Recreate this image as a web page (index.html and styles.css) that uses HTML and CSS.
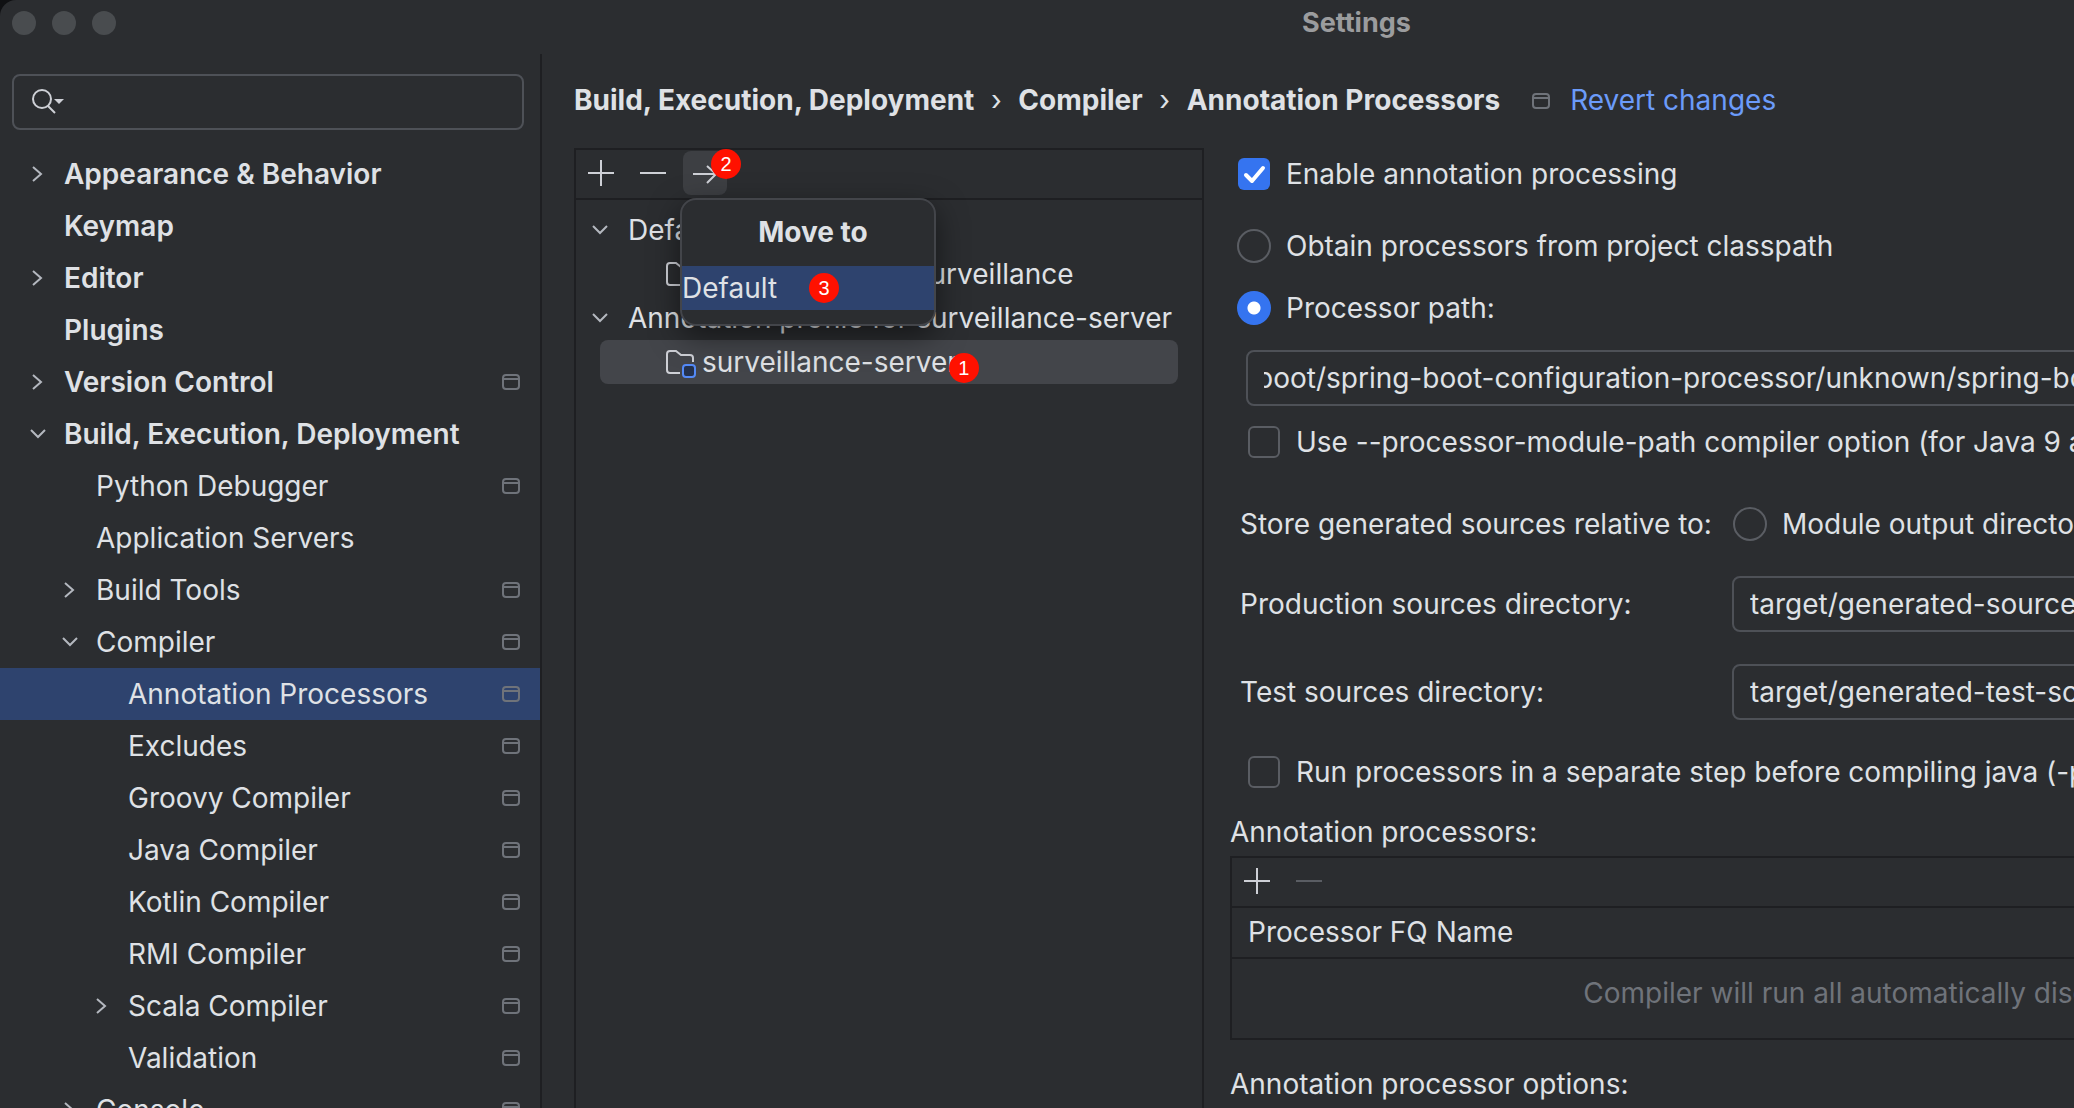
FILE: index.html
```html
<!DOCTYPE html>

<html lang="en">
	<head>
		<meta charset="utf-8">
		<meta name="viewport" content="width=device-width, initial-scale=1">
		<title>Settings</title>
		<link rel="stylesheet" href="styles.css">
	</head>

	<body>
		<!-- Shared icons -->
		<svg class="sprite" aria-hidden="true">
			<symbol id="right" viewBox="0 0 32 32">
				<path d="M11 9l8 7-8 7" />
			</symbol>
			<symbol id="down" viewBox="0 0 32 32">
				<path d="M9 12l7 7 7-7" />
			</symbol>
			<symbol id="project" viewBox="0 0 18 16">
				<rect x="1" y="1" width="16" height="14" rx="3" />
				<path d="M1 5h16" />
			</symbol>
			<symbol id="plus" viewBox="0 0 26 26">
				<path d="M0 13h26M13 0v26" />
			</symbol>
			<symbol id="minus" viewBox="0 0 26 26">
				<path d="M0 13h26" />
			</symbol>
			<symbol id="arrow" viewBox="0 0 26 26">
				<path d="M1 14h23M15 6l9 8-9 9" />
			</symbol>
			<symbol id="module" viewBox="0 0 32 32">
				<path d="M16 27H6q-3 0-3-3V8q0-3 3-3h6l5 4h9q3 0 3 3v4" />
				<rect class="module-mark" x="19" y="19" width="12" height="12" rx="3" />
			</symbol>
		</svg>

		<div class="window">
			<header class="titlebar">
				<div class="lights"><i></i><i></i><i></i></div>
				<h1>Settings</h1>
			</header>

			<div class="content">
				<nav class="sidebar">
					<label class="search">
						<svg viewBox="0 0 36 28" aria-hidden="true">
							<circle cx="11" cy="11" r="9" />
							<path d="M17 18l7 7" />
							<path class="fill" d="M23 11h10l-5 5z" />
						</svg>
						<input type="text" aria-label="Search settings">
					</label>

					<a href="#" class="item top"><svg class="chevron"><use href="#right" /></svg>Appearance &amp; Behavior</a>
					<a href="#" class="item top leaf">Keymap</a>
					<a href="#" class="item top"><svg class="chevron"><use href="#right" /></svg>Editor</a>
					<a href="#" class="item top leaf">Plugins</a>
					<a href="#" class="item top"><svg class="chevron"><use href="#right" /></svg>Version Control<svg class="project"><use href="#project" /></svg></a>
					<a href="#" class="item top"><svg class="chevron"><use href="#down" /></svg>Build, Execution, Deployment</a>
					<a href="#" class="item second leaf">Python Debugger<svg class="project"><use href="#project" /></svg></a>
					<a href="#" class="item second leaf">Application Servers</a>
					<a href="#" class="item second"><svg class="chevron"><use href="#right" /></svg>Build Tools<svg class="project"><use href="#project" /></svg></a>
					<a href="#" class="item second"><svg class="chevron"><use href="#down" /></svg>Compiler<svg class="project"><use href="#project" /></svg></a>
					<a href="#" class="item third leaf selected">Annotation Processors<svg class="project"><use href="#project" /></svg></a>
					<a href="#" class="item third leaf">Excludes<svg class="project"><use href="#project" /></svg></a>
					<a href="#" class="item third leaf">Groovy Compiler<svg class="project"><use href="#project" /></svg></a>
					<a href="#" class="item third leaf">Java Compiler<svg class="project"><use href="#project" /></svg></a>
					<a href="#" class="item third leaf">Kotlin Compiler<svg class="project"><use href="#project" /></svg></a>
					<a href="#" class="item third leaf">RMI Compiler<svg class="project"><use href="#project" /></svg></a>
					<a href="#" class="item third"><svg class="chevron"><use href="#right" /></svg>Scala Compiler<svg class="project"><use href="#project" /></svg></a>
					<a href="#" class="item third leaf">Validation<svg class="project"><use href="#project" /></svg></a>
					<a href="#" class="item second"><svg class="chevron"><use href="#right" /></svg>Console<svg class="project"><use href="#project" /></svg></a>
				</nav>

				<main class="main">
					<div class="breadcrumb">
						<span>Build, Execution, Deployment</span>
						<span class="sep">›</span>
						<span>Compiler</span>
						<span class="sep">›</span>
						<span>Annotation Processors</span>
						<svg class="project"><use href="#project" /></svg>
						<a href="#">Revert changes</a>
					</div>

					<div class="columns">
						<section class="profiles">
							<div class="toolbar">
								<button type="button" aria-label="Add"><svg><use href="#plus" /></svg></button>
								<button type="button" aria-label="Remove"><svg><use href="#minus" /></svg></button>
								<div class="move">
									<button type="button" class="pressed" aria-label="Move to"><svg><use href="#arrow" /></svg></button>
									<b class="badge">2</b>
									<div class="popup">
										<h2>Move to</h2>
										<button type="button">Default<b class="badge">3</b></button>
									</div>
								</div>
							</div>
							<div class="tree">
								<div class="node"><svg class="chevron"><use href="#down" /></svg>Default</div>
								<div class="node module"><svg class="folder"><use href="#module" /></svg>parent-product-surveillance</div>
								<div class="node"><svg class="chevron"><use href="#down" /></svg>Annotation profile for surveillance-server</div>
								<div class="node module current"><svg class="folder"><use href="#module" /></svg><span>surveillance-server<b class="badge">1</b></span></div>
							</div>
						</section>

						<form class="options">
							<label class="row"><input type="checkbox" checked>Enable annotation processing</label>
							<label class="row classpath"><input type="radio" name="source">Obtain processors from project classpath</label>
							<label class="row path"><input type="radio" name="source" checked>Processor path:</label>
							<input type="text" class="field path-field" aria-label="Processor path" value="boot/spring-boot-configuration-processor/unknown/spring-boot-configuration-processor-unknown.jar">
							<label class="row inset"><input type="checkbox">Use --processor-module-path compiler option (for Java 9 and later)</label>

							<div class="pair store">
								<span>Store generated sources relative to:</span>
								<label class="row"><input type="radio" name="store">Module output directory</label>
							</div>
							<div class="pair production">
								<label for="production">Production sources directory:</label>
								<input type="text" class="field" id="production" value="target/generated-sources/annotations">
							</div>
							<div class="pair test">
								<label for="test">Test sources directory:</label>
								<input type="text" class="field" id="test" value="target/generated-test-sources/test-annotations">
							</div>

							<label class="row inset separate"><input type="checkbox">Run processors in a separate step before compiling java (-proc:only mode)</label>

							<h3>Annotation processors:</h3>
							<div class="box">
								<div class="toolbar">
									<button type="button" aria-label="Add processor"><svg><use href="#plus" /></svg></button>
									<button type="button" aria-label="Remove processor" disabled><svg><use href="#minus" /></svg></button>
								</div>
								<table>
									<thead>
										<tr><th>Processor FQ Name</th></tr>
									</thead>
									<tbody>
										<tr><td>Compiler will run all automatically discovered processors</td></tr>
									</tbody>
								</table>
							</div>
							<h3 class="last">Annotation processor options:</h3>
						</form>
					</div>
				</main>
			</div>
		</div>
	</body>
</html>
```

FILE: styles.css
```css
* {
	box-sizing: border-box;
}

html {
	background-color: #101113;
}

body {
	margin: 0;
	height: 100vh;
	overflow: hidden;
	font: 28px Inter, "Liberation Sans", sans-serif;
	line-height: 32px;
	color: #dfe1e5;
	white-space: nowrap;
}

button, input {
	font: inherit;
	color: inherit;
	margin: 0;
}

a {
	color: inherit;
	text-decoration: none;
}

h1, h2, h3 {
	margin: 0;
	font-size: 28px;
}

svg {
	fill: none;
	stroke: #ced0d6;
	stroke-width: 2px;
	flex-shrink: 0;
}

.sprite {
	display: none;
}

/* the window is wider than the screen and runs off to the right */
.window {
	display: flex;
	flex-direction: column;
	width: 131%;
	height: 100%;
	background-color: #2b2d30;
	border-top-left-radius: 16px;
}

.titlebar {
	display: grid;
	grid-template-columns: 1fr auto 1fr;
	align-items: center;
	height: 54px;
	padding: 0 16px 8px 12px;
	flex-shrink: 0;
}

.titlebar h1 {
	font-size: 27px;
	color: #9b9c9e;
}

.lights {
	display: flex;
	gap: 16px;
}

.lights i {
	width: 24px;
	height: 24px;
	border-radius: 50%;
	background-color: #494c4f;
}

.content {
	display: flex;
	flex: 1;
	min-height: 0;
}

/* sidebar */
.sidebar {
	width: 542px;
	border-right: 2px solid #1e1f22;
	padding-top: 20px;
	overflow: hidden;
	flex-shrink: 0;
}

.search {
	display: flex;
	align-items: center;
	height: 56px;
	margin: 0 16px 18px 12px;
	padding-left: 17px;
	border: 2px solid #4e5157;
	border-radius: 8px;
}

.search svg {
	width: 36px;
	height: 28px;
}

.search .fill {
	fill: #ced0d6;
	stroke: none;
}

.search input {
	flex: 1;
	background: none;
	border: none;
	outline: none;
}

.item {
	display: flex;
	align-items: center;
	height: 52px;
	padding-right: 20px;
}

.chevron {
	width: 32px;
	height: 32px;
	margin-right: 10px;
	stroke: #b4b8bf;
}

.project {
	width: 18px;
	height: 16px;
	margin-left: auto;
	stroke: #6f737a;
}

.top {
	padding-left: 22px;
	font-weight: 600;
}

.second {
	padding-left: 54px;
}

.third {
	padding-left: 86px;
}

.leaf::before {
	content: "";
	width: 42px;
}

.selected {
	background-color: #2e436e;
}

/* main area */
.main {
	flex: 1;
	display: flex;
	flex-direction: column;
	min-width: 0;
	padding: 0 28px 0 32px;
}

.breadcrumb {
	display: flex;
	align-items: center;
	height: 92px;
	flex-shrink: 0;
	font-weight: 700;
}

.breadcrumb .sep {
	width: 44px;
	font-weight: 400;
	text-align: center;
}

.breadcrumb .project {
	margin: 2px 20px 0 32px;
}

.breadcrumb a {
	color: #6b9bfa;
	font-weight: 400;
}

.columns {
	display: flex;
	gap: 26px;
	flex: 1;
	min-height: 0;
}

.profiles {
	width: 630px;
	margin-top: 2px;
	border: 2px solid #1e1f22;
	border-bottom: none;
	flex-shrink: 0;
}

.toolbar {
	display: flex;
	align-items: center;
	gap: 8px;
	height: 50px;
	padding: 0 3px 2px;
	border-bottom: 2px solid #1e1f22;
}

.toolbar button {
	display: grid;
	place-items: center;
	width: 44px;
	height: 44px;
	padding: 0;
	border: none;
	border-radius: 8px;
	background: none;
}

.toolbar svg {
	width: 26px;
	height: 26px;
}

.toolbar button:disabled svg {
	stroke: #5a5d63;
}

.toolbar .pressed {
	background-color: #3d3f43;
}

.badge {
	position: absolute;
	width: 30px;
	height: 30px;
	border-radius: 50%;
	background-color: #ff1100;
	color: #fff;
	font: 20px "Liberation Sans", sans-serif;
	line-height: 30px;
	text-align: center;
}

.move {
	position: relative;
}

.move > .badge {
	top: -2px;
	left: 28px;
}

.popup {
	position: absolute;
	z-index: 1;
	top: 47px;
	left: -3px;
	width: 256px;
	padding-bottom: 14px;
	border: 2px solid #43454a;
	border-radius: 16px;
	background-color: #2b2d30;
	box-shadow: 0 10px 30px rgba(0, 0, 0, 0.5);
}

.popup h2 {
	padding: 0 0 2px 10px;
	line-height: 64px;
	font-weight: 700;
	text-align: center;
}

.popup button {
	display: block;
	position: relative;
	width: 100%;
	border-radius: 0;
	background-color: #2e436e;
	text-align: left;
}

.popup .badge {
	top: 7px;
	left: 127px;
}

.tree {
	padding: 8px 24px;
}

.node {
	display: flex;
	align-items: center;
	height: 44px;
}

.node .chevron {
	margin: 0 12px 0 -16px;
}

.module {
	padding-left: 64px;
	border-radius: 8px;
}

.current {
	background-color: #43454a;
}

.folder {
	width: 32px;
	height: 32px;
	margin-right: 6px;
}

.module-mark {
	fill: #25324d;
	stroke: #548af7;
}

.current span {
	position: relative;
}

.current .badge {
	top: 7px;
	right: -21px;
}

/* options form */
.options {
	flex: 1;
	min-width: 0;
}

.row {
	display: flex;
	align-items: center;
	height: 56px;
	padding-left: 8px;
}

.row input {
	appearance: none;
	width: 32px;
	height: 32px;
	margin-right: 16px;
	border: 2px solid #5a5d63;
	border-radius: 6px;
	flex-shrink: 0;
}

.row input[type="radio"] {
	width: 34px;
	height: 34px;
	margin-left: -1px;
	margin-right: 15px;
	border-radius: 50%;
}

.row input[type="radio"]:checked {
	border: none;
	background: radial-gradient(circle, #fff 6px, #3574f0 7px);
}

.row input[type="checkbox"]:checked {
	border: none;
	background: #3574f0 url("data:image/svg+xml,%3Csvg xmlns='http://www.w3.org/2000/svg' viewBox='0 0 32 32'%3E%3Cpath d='M8 17l6 6L25 10' fill='none' stroke='white' stroke-width='4' stroke-linecap='round' stroke-linejoin='round'/%3E%3C/svg%3E");
}

.inset {
	margin-top: 8px;
	padding-left: 18px;
}

.classpath {
	margin-top: 16px;
}

.path {
	margin: 6px 0 14px;
}

.field {
	display: block;
	width: 100%;
	height: 56px;
	padding: 0 16px;
	border: 2px solid #4e5157;
	border-radius: 8px;
	background: none;
}

.path-field {
	width: calc(100% - 16px);
	margin-left: 16px;
	text-indent: -8px;
}

.pair {
	display: grid;
	grid-template-columns: 492px 1fr;
	align-items: center;
	padding-left: 10px;
}

.pair .row {
	padding-left: 2px;
}

.store {
	margin-top: 26px;
}

.production {
	margin-top: 24px;
}

.test {
	margin-top: 32px;
}

.separate {
	margin: 24px 0 16px;
}

.options h3 {
	font-weight: 400;
}

.box {
	margin-top: 8px;
	border: 2px solid #1e1f22;
}

.box table {
	width: 100%;
	border-collapse: collapse;
}

.box th {
	height: 50px;
	padding: 0 16px 2px;
	border-bottom: 2px solid #1e1f22;
	font-weight: 400;
	text-align: left;
}

.box td {
	height: 80px;
	padding: 0 0 12px;
	color: #6f737a;
	text-align: center;
}

.last {
	margin-top: 28px;
}
```
